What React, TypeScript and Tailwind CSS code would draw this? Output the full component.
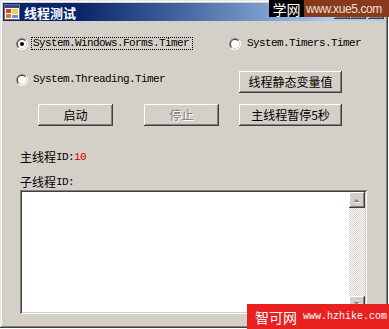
const RAISED =
  'shadow-[inset_-1px_-1px_#404040,inset_1px_1px_#ffffff,inset_-2px_-2px_#808080,inset_2px_2px_#d4d0c8]';

const CJK = "font-['Noto_Sans_CJK_SC',sans-serif]";
const MONO = "font-['Liberation_Mono','Noto_Sans_CJK_SC',monospace]";

function Radio({ checked = false }: { checked?: boolean }) {
  return (
    <svg width="12" height="12" viewBox="0 0 12 12" className="shrink-0">
      <circle cx="6" cy="6" r="6" fill="#ffffff" />
      <path d="M1.757 10.243A6 6 0 0 1 10.243 1.757Z" fill="#808080" />
      <circle cx="6" cy="6" r="5" fill="#d4d0c8" />
      <path d="M2.464 9.536A5 5 0 0 1 9.536 2.464Z" fill="#404040" />
      <circle cx="6" cy="6" r="4" fill="#ffffff" />
      {checked ? <circle cx="6" cy="6" r="2" fill="#000000" /> : null}
    </svg>
  );
}

function WinButton({ label, width, disabled = false }: { label: string; width: string; disabled?: boolean }) {
  return (
    <div
      className={`flex h-[22px] items-center justify-center bg-[#d4d0c8] text-[12px] leading-none ${CJK} ${width} ${RAISED} ${
        disabled ? 'text-[#808080] [text-shadow:1px_1px_0_#ffffff]' : 'text-black'
      }`}
    >
      {label}
    </div>
  );
}

function ScrollArrow({ up }: { up: boolean }) {
  return (
    <div className={`flex h-[16px] w-[16px] items-center justify-center bg-[#d4d0c8] ${RAISED}`}>
      <svg width="8" height="5" viewBox="0 0 8 5">
        {up ? (
          <>
            <path d="M1.5 5 L4.5 2 L7.5 5Z" fill="#ffffff" />
            <path d="M0.5 4 L3.5 1 L6.5 4Z" fill="#808080" />
          </>
        ) : (
          <>
            <path d="M1.5 1 L4.5 4 L7.5 1Z" fill="#ffffff" />
            <path d="M0.5 0 L3.5 3 L6.5 0Z" fill="#808080" />
          </>
        )}
      </svg>
    </div>
  );
}

function FormIcon() {
  return (
    <svg width="16" height="16" viewBox="0 0 16 16" className="shrink-0">
      <rect x="0.5" y="0.5" width="15" height="15" fill="#ffffff" stroke="#6a6a8a" />
      <rect x="1" y="1" width="14" height="3" fill="#2a4a9a" />
      <rect x="2" y="5" width="5" height="4" fill="#e04020" />
      <rect x="8" y="5" width="6" height="5" fill="#f0d040" />
      <rect x="2" y="10" width="5" height="4" fill="#d08030" />
      <rect x="8" y="11" width="6" height="3" fill="#7090d0" />
    </svg>
  );
}

export default function App() {
  return (
    <div className="relative h-[329px] w-[389px] overflow-hidden bg-white">
      <div className="h-[328px] w-[388px] bg-[#d4d0c8] p-[3px] shadow-[inset_-1px_-1px_#404040,inset_1px_1px_#e8e6e0,inset_-2px_-2px_#808080,inset_2px_2px_#ffffff]">
        {/* Title bar */}
        <div className="flex h-[18px] items-center bg-linear-to-r from-[#0a246a] from-20% to-[#a6caf0] to-85% px-[1px]">
          <FormIcon />
          <span className={`ml-[4px] text-[13px] font-bold leading-none text-white ${CJK}`}>线程测试</span>
          <div className="ml-auto flex items-center">
            <div className={`h-[14px] w-[16px] bg-[#d4d0c8] ${RAISED}`} />
            <div className={`h-[14px] w-[16px] bg-[#d4d0c8] ${RAISED}`} />
            <div className={`ml-[2px] h-[14px] w-[16px] bg-[#d4d0c8] ${RAISED}`} />
          </div>
        </div>

        {/* Row 1 */}
        <div className="ml-[13px] mt-[16px] flex h-[13px] items-center">
          <Radio checked />
          <span
            className={`ml-[3px] flex h-[13px] w-[162px] items-center border border-dotted border-black pl-[1px] text-[11px] leading-none tracking-[-0.6px] text-black ${MONO}`}
          >
            System.Windows.Forms.Timer
          </span>
          <div className="ml-[36px]">
            <Radio />
          </div>
          <span className={`ml-[6px] text-[11px] leading-none tracking-[-0.6px] text-black ${MONO}`}>
            System.Timers.Timer
          </span>
        </div>

        {/* Row 2 */}
        <div className="ml-[13px] mt-[21px] flex items-start">
          <div className="mt-[2px] flex h-[13px] w-[223px] items-center">
            <Radio />
            <span className={`ml-[5px] text-[11px] leading-none tracking-[-0.6px] text-black ${MONO}`}>
              System.Threading.Timer
            </span>
          </div>
          <WinButton label="线程静态变量值" width="w-[103px]" />
        </div>

        {/* Row 3 */}
        <div className="ml-[35px] mt-[11px] flex items-center">
          <WinButton label="启动" width="w-[75px]" />
          <div className="ml-[31px]">
            <WinButton label="停止" width="w-[75px]" disabled />
          </div>
          <div className="ml-[20px]">
            <WinButton label="主线程暂停5秒" width="w-[103px]" />
          </div>
        </div>

        {/* Labels */}
        <div className={`ml-[17px] mt-[24px] flex h-[14px] items-center text-[12px] leading-none text-black ${CJK}`}>
          主线程<span className={`text-[11px] tracking-[-0.6px] ${MONO}`}>ID:</span>
          <span className={`text-[11px] tracking-[-0.6px] text-[#cc0000] ${MONO}`}>10</span>
        </div>
        <div className={`ml-[17px] mt-[11px] flex h-[14px] items-center text-[12px] leading-none text-black ${CJK}`}>
          子线程<span className={`text-[11px] tracking-[-0.6px] ${MONO}`}>ID:</span>
        </div>

        {/* Text box */}
        <div className="ml-[17px] mt-[1px] flex h-[124px] w-[347px] bg-white p-[2px] shadow-[inset_1px_1px_#808080,inset_-1px_-1px_#ffffff,inset_2px_2px_#404040,inset_-2px_-2px_#d4d0c8]">
          <div className="flex-1" />
          <div className="flex w-[16px] flex-col bg-[repeating-conic-gradient(#d4d0c8_0_25%,#ffffff_0_50%)] bg-[length:2px_2px]">
            <ScrollArrow up />
            <div className="flex-1" />
            <ScrollArrow up={false} />
          </div>
        </div>
      </div>

      {/* Watermarks */}
      <div className="absolute left-[269px] top-0 flex h-[17px]">
        <div className={`flex w-[35px] items-center justify-center bg-black text-[14px] leading-none text-white ${CJK}`}>
          学网
        </div>
        <div className="flex w-[85px] items-center bg-[#8a3a1c] pl-[2px] font-['Liberation_Sans',sans-serif] text-[12px] leading-none tracking-[-0.4px] text-[#e8e0d8]">
          www.xue5.com
        </div>
      </div>
      <div className="absolute left-[247px] top-[304px] flex h-[25px] w-[142px] items-center bg-[#e82020] pl-[8px]">
        <span className={`text-[14px] leading-none text-white ${CJK}`}>智可网</span>
        <span className={`ml-[6px] text-[10px] leading-none text-white ${MONO}`}>www.hzhike.com</span>
      </div>
    </div>
  );
}
